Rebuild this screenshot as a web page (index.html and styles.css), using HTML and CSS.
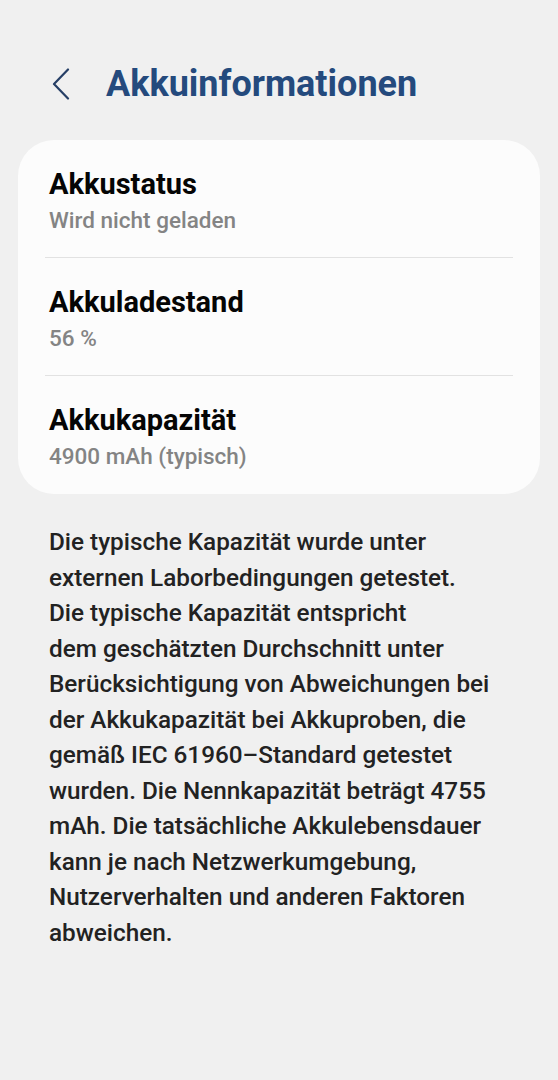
FILE: index.html
```html
<!DOCTYPE html>
<html lang="de">
<head>
    <meta charset="UTF-8">
    <meta name="viewport" content="width=device-width, initial-scale=1.0">
    <title>Akkuinformationen</title>
    <link rel="stylesheet" href="styles.css">
</head>
<body>
    <header class="kopf">
        <span class="zurueck">
            <svg width="18" height="32" viewBox="0 0 18 32">
                <path d="M16 1.5 L2 16 L16 30.5" fill="none" stroke="#263f66" stroke-width="2.2" stroke-linecap="round" stroke-linejoin="round"/>
            </svg>
        </span>
        <h1>Akkuinformationen</h1>
    </header>

    <div class="karte">
        <div class="zeile">
            <div class="titel">Akkustatus</div>
            <div class="wert">Wird nicht geladen</div>
        </div>
        <div class="zeile">
            <div class="titel">Akkuladestand</div>
            <div class="wert">56 %</div>
        </div>
        <div class="zeile">
            <div class="titel">Akkukapazität</div>
            <div class="wert">4900 mAh (typisch)</div>
        </div>
    </div>

    <p class="hinweis">Die typische Kapazität wurde unter externen Laborbedingungen getestet.<br>Die typische Kapazität entspricht<br>dem geschätzten Durchschnitt unter Berücksichtigung von Abweichungen bei der Akkukapazität bei Akkuproben, die gemäß IEC 61960–Standard getestet wurden. Die Nennkapazität beträgt 4755 mAh. Die tatsächliche Akkulebensdauer kann je nach Netzwerkumgebung, Nutzerverhalten und anderen Faktoren abweichen.</p>
</body>
</html>
```

FILE: styles.css
```css
body {
    margin: 0;
    background-color: #f0f0f0;
    font-family: Roboto, "Noto Sans", sans-serif;
}

.kopf {
    display: flex;
    align-items: center;
    height: 140px;
    padding: 28px 0 0 52px;
    box-sizing: border-box;
}

.zurueck {
    display: flex;
    width: 54px;
}

h1 {
    margin: 0;
    font-size: 36px;
    font-weight: 700;
    color: #244a7d;
}

.karte {
    margin: 0 18px;
    background-color: #fcfcfc;
    border-radius: 36px;
    padding: 0 27px;
}

.zeile {
    padding: 26px 4px 0;
    height: 118px;
    box-sizing: border-box;
    border-bottom: 1px solid #e2e2e2;
}

.zeile:last-child {
    border-bottom: none;
}

.titel {
    font-size: 29px;
    font-weight: 700;
    color: #050505;
    line-height: 36px;
}

.wert {
    font-size: 22.5px;
    font-weight: 500;
    color: #848484;
    line-height: 36px;
}

.hinweis {
    margin: 30px 50px 0 49px;
    font-size: 24.3px;
    font-weight: 500;
    line-height: 35.5px;
    color: #222;
}
```
